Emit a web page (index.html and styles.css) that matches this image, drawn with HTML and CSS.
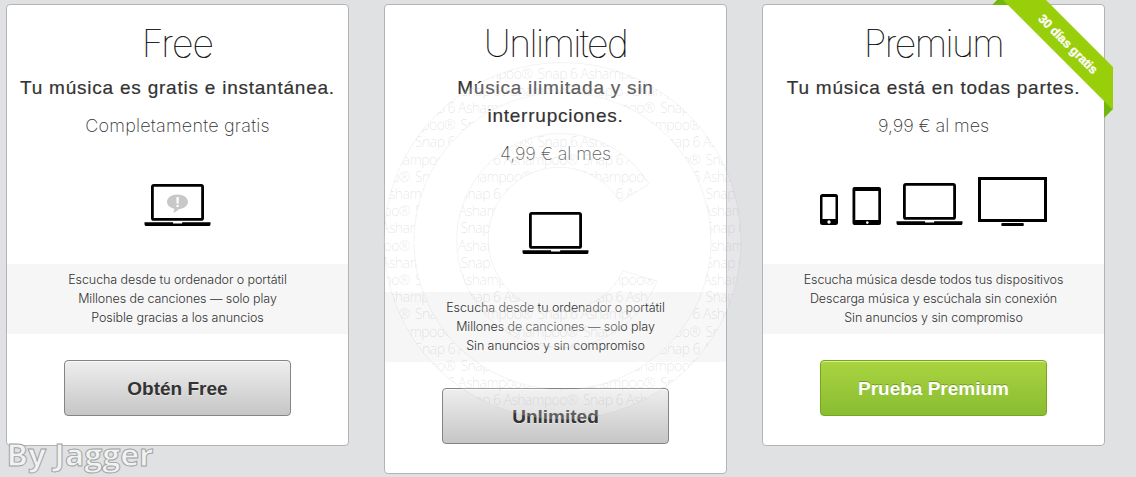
FILE: index.html
```
<!DOCTYPE html>
<html lang="es">
<head>
<meta charset="utf-8">
<title>Planes</title>
<link rel="stylesheet" href="styles.css">
</head>
<body>
<svg class="symbols" width="0" height="0">
  <symbol id="laptop" viewBox="0 0 68 43">
    <rect x="8.4" y="1.4" width="50.2" height="34" rx="1.5" fill="#fff" stroke="#000" stroke-width="2.8"/>
    <path d="M.5 38.2H29v.8q0 .6.8.6h7.600q.8 0 .8-.6v-.8H66.500v2q0 1.900-1.900 1.900H2.400Q.5 42.100.5 40.200z"/>
  </symbol>
</svg>
<main class="plans">
  <section class="plan">
    <h2 class="title t-free">Free</h2>
    <p class="tagline">Tu música es gratis e instantánea.</p>
    <p class="price p-free">Completamente gratis</p>
    <div class="devices">
      <svg width="68" height="43" viewBox="0 0 68 43"><use href="#laptop"/>
        <path d="M33.500 10.500c6 0 10.500 3.200 10.500 7.300 0 3.900-4 7-9.400 7.400-1.300 1.700-3.300 2.900-5.700 3.400 1-1.200 1.500-2.400 1.400-3.900-4.300-.9-7.300-3.500-7.300-6.900 0-4.100 4.500-7.300 10.500-7.300z" fill="#c8c8c8"/>
        <path d="M32.300 13.200h2.600l-.4 6.600h-1.800zM32.500 21h2.200v2.100h-2.200z" fill="#fff"/>
      </svg>
    </div>
    <ul class="features">
      <li>Escucha desde tu ordenador o portátil</li>
      <li>Millones de canciones — solo play</li>
      <li>Posible gracias a los anuncios</li>
    </ul>
    <a class="button">Obtén Free</a>
  </section>
  <section class="plan">
    <h2 class="title">Unlimited</h2>
    <p class="tagline">Música ilimitada y sin<br>interrupciones.</p>
    <p class="price">4,99 € al mes</p>
    <div class="devices">
      <svg width="68" height="43"><use href="#laptop"/></svg>
    </div>
    <ul class="features">
      <li>Escucha desde tu ordenador o portátil</li>
      <li>Millones de canciones — solo play</li>
      <li>Sin anuncios y sin compromiso</li>
    </ul>
    <a class="button">Unlimited</a>
  </section>
  <section class="plan">
    <h2 class="title">Premium</h2>
    <p class="tagline">Tu música está en todas partes.</p>
    <p class="price">9,99 € al mes</p>
    <div class="devices">
      <svg width="228" height="50" viewBox="0 0 228 50">
        <rect y="17" width="18" height="31" rx="2.500"/><rect x="2.500" y="20" width="13" height="22" fill="#fff"/><circle cx="9" cy="45" r="1.700" fill="#fff"/>
        <rect x="32.500" y="10" width="28.500" height="38" rx="2"/><rect x="35.300" y="14" width="23" height="29" fill="#fff"/><circle cx="47.300" cy="45.600" r="1.300" fill="#fff"/>
        <use href="#laptop" x="76" y="6" width="68" height="43"/>
        <rect x="159.500" y="1.500" width="66" height="42" fill="#fff" stroke="#000" stroke-width="3"/>
        <rect x="181.300" y="46" width="22.500" height="3" rx="1"/>
      </svg>
    </div>
    <ul class="features">
      <li>Escucha música desde todos tus dispositivos</li>
      <li>Descarga música y escúchala sin conexión</li>
      <li>Sin anuncios y sin compromiso</li>
    </ul>
    <a class="button green">Prueba Premium</a>
  </section>
</main>
<svg class="ribbon" width="122" height="120" viewBox="991 0 122 120">
  <path d="M992 5l5-5h8l3 5zM1104 100v18l9-9v-9z" fill="#71b70c"/>
  <path d="M1003 0h43l67 67v43z" fill="#99ce0b"/>
  <text class="ribbon-text" transform="translate(1037.500 19.500) rotate(45)" textLength="78">30 días gratis</text>
</svg>
<svg class="watermark" width="1136" height="477" viewBox="0 0 1136 477">
  <defs>
    <clipPath id="ring"><path clip-rule="evenodd" d="M384 241a178.500 178.500 0 1 0 357 0a178.500 178.500 0 1 0-357 0zM414 241a148.500 148.500 0 1 1 297 0a148.500 148.500 0 1 1-297 0zM649 184A104 107 0 1 0 657 281L623 271A71 72 0 1 1 620 202z"/></clipPath>
  </defs>
  <rect x="380" y="60" width="365" height="362" fill="#fff" fill-opacity=".22" clip-path="url(#ring)"/>
  <g class="outline">
    <circle cx="562.500" cy="241" r="178.500"/><circle cx="562.500" cy="241" r="148.500"/>
    <path d="M649 184A104 107 0 1 0 657 281L623 271A71 72 0 1 1 620 202z"/>
  </g>
  <g class="stamp" clip-path="url(#ring)" id="stamp"></g>
  <text class="author" x="6.500" y="465.500" textLength="147" lengthAdjust="spacingAndGlyphs">By Jagger</text>
</svg>
<script src="stamp.js"></script>
</body>
</html>
```
FILE: styles.css
```
body { margin: 0; width: 1136px; height: 477px; overflow: hidden; position: relative; background: #e0e1e3; font-family: "Liberation Sans", sans-serif; color: #333; }
.symbols { position: absolute; }
.plans { display: flex; align-items: flex-start; gap: 35px; padding: 4px 0 0 6px; }
.plan { box-sizing: border-box; width: 343px; flex: none; border: 1px solid #b3b4b7; border-radius: 4px; background: #fff; padding: 15px 0 29px; display: flex; flex-direction: column; align-items: center; text-align: center; }
.title { margin: 0; font: 100 37.5px/48px Inter, sans-serif; color: #000; letter-spacing: -1.6px; -webkit-text-stroke: .2px #000; white-space: nowrap; }
.t-free { letter-spacing: -.8px; }
.tagline { margin: 6px 0 0; font-size: 19px; line-height: 28px; letter-spacing: .77px; white-space: nowrap; -webkit-text-stroke: .2px #333; }
.price { margin: 10px 0 0; font: 200 18px/28px Inter, sans-serif; letter-spacing: -.1px; white-space: nowrap; }
.p-free { letter-spacing: .22px; }
.devices { box-sizing: border-box; height: 124px; padding-bottom: 37px; display: flex; align-items: flex-end; justify-content: center; }
.features { box-sizing: border-box; width: 100%; height: 70px; margin: 0; padding: 6px 0 7px; list-style: none; background: #f6f6f6; font: 300 12.5px/19px Inter, sans-serif; letter-spacing: -.08px; white-space: nowrap; }
.button { box-sizing: border-box; width: 227px; height: 56px; margin-top: 26px; border: 1px solid #858585; border-radius: 4px; background: linear-gradient(#eee, #c6c6c6); box-shadow: inset 0 1px #f8f8f8; font-size: 19px; font-weight: 700; line-height: 55px; text-shadow: 0 1px rgba(255,255,255,.4); }
.green { border-color: #78a51b; background: linear-gradient(#a9d440, #89bd32); box-shadow: inset 0 1px #d5ec98; color: #fff; text-shadow: 0 -1px rgba(70,110,0,.5); }
.ribbon { position: absolute; left: 991px; top: 0; }
.ribbon-text { font-size: 12.5px; font-weight: 700; fill: #fff; stroke: #fff; stroke-width: .3; }
.watermark { position: absolute; left: 0; top: 0; pointer-events: none; }
.outline { fill: none; stroke: #888; stroke-opacity: .1; stroke-width: 1; }
.stamp { font: 300 14px "Open Sans", sans-serif; fill: #777; fill-opacity: .19; }
.author { font: 700 29.5px "Open Sans", sans-serif; fill: #f1f2f2; stroke: #a0a2a2; stroke-width: .9; }
```
FILE: stamp.js
```
// Fills the watermark with staggered rows of text.
const stamp = document.getElementById("stamp");
for (let row = 0; row < 21; row++) {
  const start = row % 2 ? 338 : 293;
  for (let col = 0; col < 4; col++) {
    const t = document.createElementNS("http://www.w3.org/2000/svg", "text");
    t.setAttribute("x", start + (row % 2 ? 0 : -.500) + col * 122.500);
    t.setAttribute("y", 78.500 + row * 17.200);
    t.setAttribute("textLength", 118);
    t.textContent = "Snap 6 Ashampoo®";
    stamp.appendChild(t);
  }
}
```
